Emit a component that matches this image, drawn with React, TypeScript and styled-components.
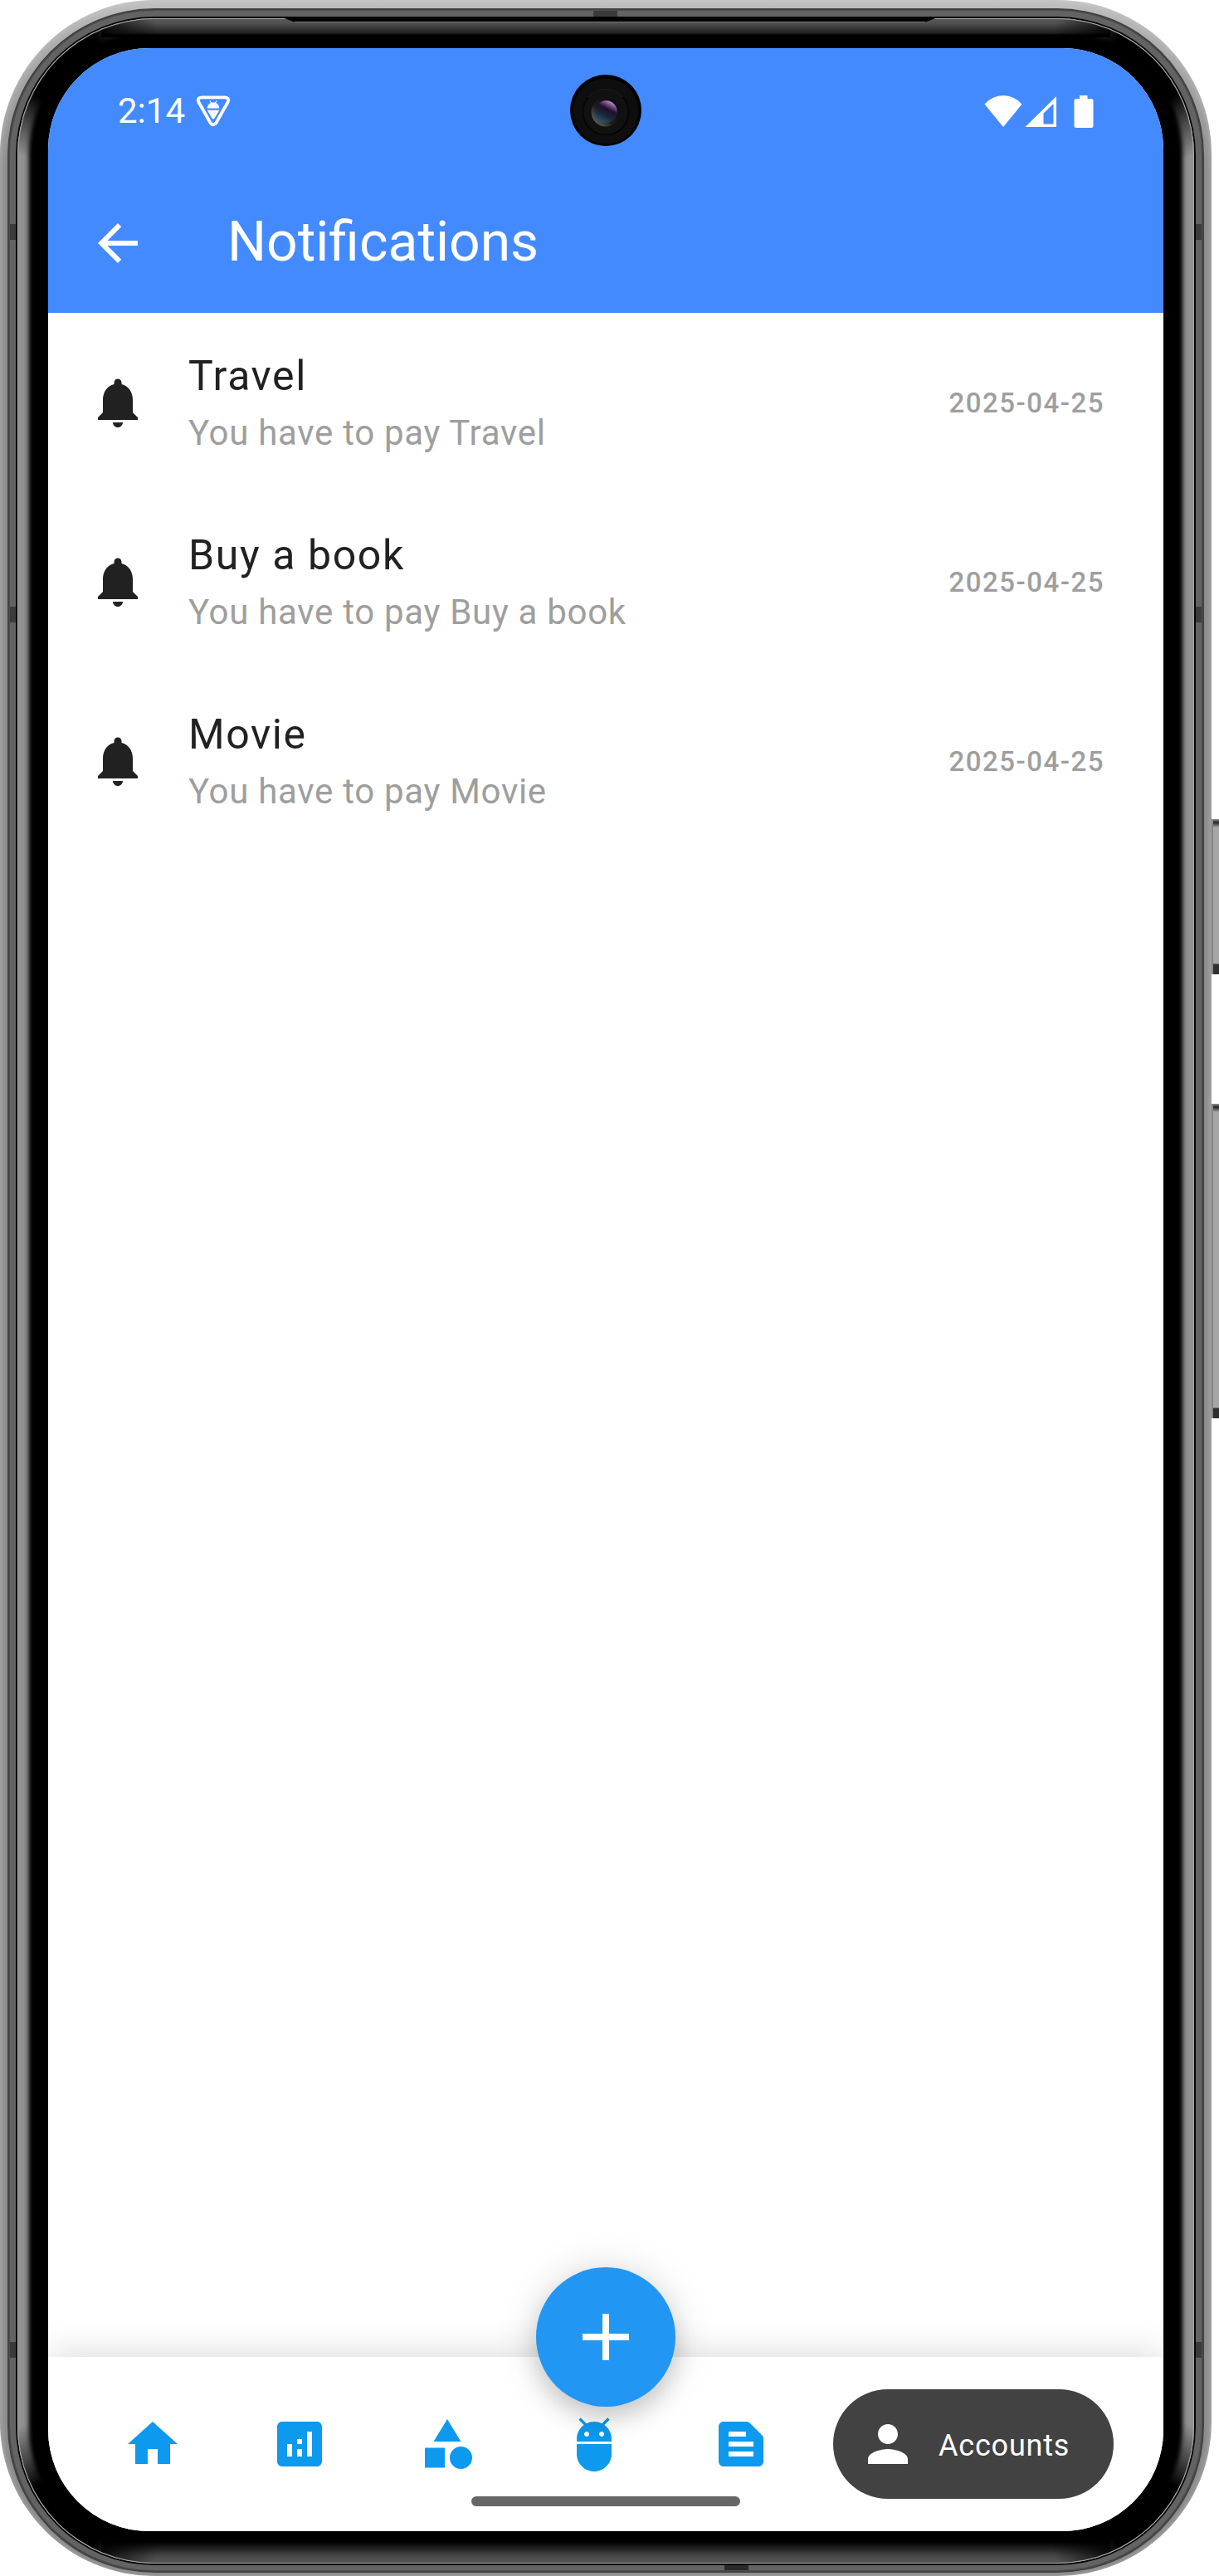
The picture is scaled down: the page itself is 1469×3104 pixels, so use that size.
import React from 'react';
import styled, { createGlobalStyle } from 'styled-components';

const GlobalStyle = createGlobalStyle`
  *, *::before, *::after { box-sizing: border-box; }
  body {
    margin: 0;
    background: #fff;
    font-family: Roboto, "Noto Sans", sans-serif;
  }
  svg { display: block; flex: none; }
`;

/* ---------- device ---------- */

const Stage = styled.div`
  display: flex;
  width: 1469px;
  height: 3104px;
  overflow: hidden;
`;

const Shell = styled.div`
  flex: none;
  width: 1460px;
  height: 3104px;
  padding: 10px 9px 4px;
  border-radius: 186px;
  background: linear-gradient(#c0c0c0 0, #b0b0b0 40px, #8c8c8c 200px, #8c8c8c 2900px, #808080 3104px);
  box-shadow: inset 0 0 8px 1px rgba(215, 215, 215, 0.5);
`;

const Band = styled.div`
  height: 3090px;
  padding: 12px 12px 11px;
  border-radius: 177px;
  background:
    linear-gradient(#3c3c3c, #3c3c3c) 0 260px / 100% 19px no-repeat,
    linear-gradient(#3c3c3c, #3c3c3c) 0 721px / 100% 19px no-repeat,
    linear-gradient(#3a3a3a, #3a3a3a) 0 2812px / 100% 19px no-repeat,
    linear-gradient(#3a3a3a, #3a3a3a) 706px 0 / 29px 30px no-repeat,
    linear-gradient(#2a2a2a, #2a2a2a) 864px 100% / 29px 12px no-repeat,
    #636363;
  box-shadow:
    inset 0 0 1px 2px #424242,
    inset 0 0 0 3px #505050;
`;

const Glass = styled.div`
  position: relative;
  height: 3067px;
  padding: 36px 37px 39px;
  border-radius: 165px;
  background: #000;
  box-shadow:
    0 0 0 2px #060606,
    inset 0 0 0 1px #a8a8a8,
    inset 0 0 5px 11px #929292,
    inset 0 0 5px 14px #6e6e6e;

  &::before {
    content: '';
    position: absolute;
    inset: 1px;
    border-radius: 164px;
    background:
      radial-gradient(circle at 50px 50px, #000 50px, rgba(0, 0, 0, 0.5) 85px, transparent 124px) 0 0 / 180px 180px no-repeat,
      radial-gradient(circle at 130px 50px, #000 50px, rgba(0, 0, 0, 0.5) 85px, transparent 124px) 100% 0 / 180px 180px no-repeat,
      radial-gradient(circle at 50px 130px, #000 50px, rgba(0, 0, 0, 0.5) 85px, transparent 124px) 0 100% / 180px 180px no-repeat,
      radial-gradient(circle at 130px 130px, #000 50px, rgba(0, 0, 0, 0.5) 85px, transparent 124px) 100% 100% / 180px 180px no-repeat,
      linear-gradient(#5a5a5a 0, #505050 5px, #202020 17px, #000 19px) 50% 0 / calc(100% - 200px) 22px no-repeat,
      linear-gradient(0deg, #555 0, #484848 8px, #000 25px) 50% 100% / calc(100% - 200px) 27px no-repeat;
  }
`;

const Speaker = styled.div`
  position: absolute;
  top: -1px;
  left: 319px;
  width: 790px;
  height: 6px;
  background: #000;
  border-bottom: 1px solid #777;
  clip-path: polygon(0 0, 100% 0, 98% 100%, 2% 100%);
`;

const SideKeys = styled.div`
  flex: none;
  width: 9px;
  padding-top: 987px;
  display: flex;
  flex-direction: column;
  gap: 156px;
`;

const SideKey = styled.div<{ $length: number }>`
  height: ${({ $length }) => $length}px;
  border-left: 2px solid #858585;
  background: linear-gradient(#999 0, #222 4px, #a6a6a6 10px, #a6a6a6 calc(100% - 13px), #303030 calc(100% - 12px), #303030 100%);
`;

const Screen = styled.div`
  position: relative;
  display: flex;
  flex-direction: column;
  width: 1344px;
  height: 2992px;
  border-radius: 122px;
  background: #fff;
  overflow: hidden;
`;

const Camera = styled.div`
  position: absolute;
  left: 629px;
  top: 32px;
`;

/* ---------- top of the app ---------- */

const Header = styled.header`
  flex: none;
  height: 319px;
  background: #448aff;
  color: #fff;
`;

const StatusBar = styled.div`
  display: flex;
  align-items: center;
  height: 151px;
  padding: 0 84px;
`;

const Clock = styled.span`
  width: 94px;
  font-size: 42px;
  line-height: 50px;
`;

const StatusIcons = styled.div`
  display: flex;
  align-items: center;
  margin-left: auto;
`;

const SignalSlot = styled.span`
  margin: 0 20px 0 3px;
`;

const AppBar = styled.div`
  display: flex;
  align-items: center;
  gap: 96px;
  height: 168px;
  padding-left: 48px;
`;

const AppTitle = styled.h1`
  margin: 0;
  font-size: 66px;
  font-weight: 400;
  line-height: 76px;
  padding-bottom: 2px;
`;

/* ---------- list ---------- */

const List = styled.ul`
  flex: 1;
  margin: 0;
  padding: 0;
  list-style: none;
`;

const Row = styled.li`
  display: flex;
  align-items: center;
  height: 216px;
  padding: 0 71px 0 48px;
  color: #212121;
`;

const RowText = styled.div`
  flex: 1;
  margin-left: 49px;
  padding-top: 2px;
`;

const RowTitle = styled.div`
  font-size: 50px;
  line-height: 72px;
  letter-spacing: 1.6px;
`;

const RowSubtitle = styled.div`
  font-size: 42px;
  line-height: 66px;
  letter-spacing: 0.7px;
  color: #9e9e9e;
`;

const RowDate = styled.time`
  font-size: 33px;
  font-weight: 500;
  letter-spacing: 1.5px;
  color: #9e9e9e;
`;

/* ---------- bottom navigation ---------- */

const BottomBar = styled.nav`
  position: relative;
  display: flex;
  align-items: center;
  flex: none;
  height: 210px;
  padding: 0 60px 0 90px;
  background: #fff;
  color: #0d99ee;
  box-shadow: 0 -3px 42px rgba(0, 0, 0, 0.15);
`;

const Tabs = styled.div`
  display: flex;
  justify-content: space-between;
  width: 781px;
`;

const ActiveTab = styled.div`
  display: flex;
  align-items: center;
  gap: 25px;
  width: 338px;
  height: 132px;
  margin-left: auto;
  padding-left: 30px;
  border-radius: 66px;
  background: #424242;
  color: #fff;
`;

const TabLabel = styled.span`
  padding-top: 3px;
  font-size: 36px;
  letter-spacing: 0.8px;
`;

const AddButton = styled.button`
  position: absolute;
  left: 588px;
  top: -108px;
  display: grid;
  place-items: center;
  width: 168px;
  height: 168px;
  padding: 0;
  border: 0;
  border-radius: 50%;
  background: #2196f3;
  color: #fff;
  box-shadow: 0 14px 28px rgba(0, 0, 0, 0.15), 0 2px 50px rgba(0, 0, 0, 0.14);
`;

const GestureBar = styled.div`
  position: absolute;
  left: 510px;
  bottom: 30px;
  width: 324px;
  height: 12px;
  border-radius: 6px;
  background: #666;
`;

/* ---------- icons ---------- */

const icons = {
  back: 'M20 11H7.83l5.59-5.59L12 4l-8 8 8 8 1.41-1.41L7.83 13H20v-2z',
  bell: 'M12 22c1.1 0 2-.9 2-2h-4c0 1.1.89 2 2 2zm6-6v-5c0-3.07-1.64-5.64-4.5-6.32V4c0-.83-.67-1.5-1.5-1.5s-1.5.67-1.5 1.5v.68C7.63 5.36 6 7.92 6 11v5l-2 2v1h16v-1l-2-2z',
  home: 'M10 20v-6h4v6h5v-8h3L12 3 2 12h3v8z',
  analytics:
    'M19 3H5c-1.1 0-2 .9-2 2v14c0 1.1.9 2 2 2h14c1.1 0 2-.9 2-2V5c0-1.1-.9-2-2-2zM9 17H7v-5h2v5zm4 0h-2v-3h2v3zm0-5h-2v-2h2v2zm4 5h-2V7h2v10z',
  category: 'M12 2l-5.5 9h11zM17.5 13a4.5 4.5 0 1 0 0 9 4.5 4.5 0 0 0 0-9zM3 13.5h8v8H3z',
  robot:
    'M5 16c0 3.87 3.13 7 7 7s7-3.13 7-7v-4H5v4zM16.12 4.37l2.1-2.1-.82-.83-2.3 2.31C14.16 3.28 13.12 3 12 3s-2.12.28-3.09.75L6.6 1.44l-.82.83 2.1 2.1C6.14 5.64 5 7.68 5 10v1h14v-1c0-2.32-1.14-4.36-2.88-5.63zM9 9c-.55 0-1-.45-1-1s.45-1 1-1 1 .45 1 1-.45 1-1 1zm6 0c-.55 0-1-.45-1-1s.45-1 1-1 1 .45 1 1-.45 1-1 1z',
  snippet:
    'M20.41 8.41l-4.83-4.83c-.37-.37-.88-.58-1.41-.58H5c-1.1 0-2 .9-2 2v14c0 1.1.9 2 2 2h14c1.1 0 2-.9 2-2V9.83c0-.53-.21-1.04-.59-1.42zM7 7h7v2H7V7zm10 10H7v-2h10v2zm0-4H7v-2h10v2z',
  person:
    'M12 12c2.21 0 4-1.79 4-4s-1.79-4-4-4-4 1.79-4 4 1.79 4 4 4zm0 2c-2.67 0-8 1.34-8 4v2h16v-2c0-2.66-5.33-4-8-4z',
  plus: 'M19 13h-6v6h-2v-6H5v-2h6V5h2v6h6v2z',
};

type IconName = keyof typeof icons;

const Icon = ({ name, size = 72 }: { name: IconName; size?: number }) => (
  <svg width={size} height={size} viewBox="0 0 24 24" fill="currentColor">
    <path fillRule="evenodd" d={icons[name]} />
  </svg>
);

const DebugBadge = () => (
  <svg width="42" height="38" viewBox="0 0 42 38" fill="#fff">
    <path d="M7 2.4H35Q41 3 38.6 8L24.500 33Q21 37.500 17.500 33L3.400 8Q1 3 7 2.400Z" fill="none" stroke="#fff" strokeWidth="3.800" />
    <path d="M13.700 15.600Q14 10.500 18 9L16.400 6.800 17.200 6.300 19 8.600H23L24.800 6.300 25.600 6.800 24 9Q28 10.500 28.300 15.600Z" />
    <path d="M13.700 17.800H28.300L22.600 27.500Q21 29.500 19.400 27.500Z" />
  </svg>
);

const Wifi = () => (
  <svg width="46" height="40" viewBox="0 0 46 40" fill="#fff">
    <path d="M0.500 11.500Q10 1 23 1T45.500 11.500L23 39Z" />
  </svg>
);

const Signal = () => (
  <svg width="39" height="40" viewBox="0 0 39 40" fill="#fff">
    <path fillRule="evenodd" d="M0.500 39L38 2V39ZM22.500 22.500V35.500H34.500V11Z" />
  </svg>
);

const Battery = () => (
  <svg width="24" height="40" viewBox="0 0 24 40" fill="#fff">
    <path d="M7 1H16.500V5H21Q23.500 5 23.500 7.500V37.500Q23.500 40 21 40H3Q.5 40 .5 37.500V7.500Q.5 5 3 5H7Z" />
  </svg>
);

const Lens = () => (
  <svg width="86" height="86" viewBox="0 0 86 86">
    <defs>
      <linearGradient id="rim" x1="0.100" y1="0.900" x2="0.800" y2="0.200">
        <stop offset="0" stopColor="#666" />
        <stop offset="0.450" stopColor="#1c1c1c" />
        <stop offset="1" stopColor="#0e0e0e" />
      </linearGradient>
      <linearGradient id="iris" x1="0.800" y1="0.050" x2="0.300" y2="1">
        <stop offset="0" stopColor="#d59be8" />
        <stop offset="0.180" stopColor="#77508a" />
        <stop offset="0.380" stopColor="#1d1028" />
        <stop offset="0.650" stopColor="#1c2438" />
        <stop offset="1" stopColor="#24586a" />
      </linearGradient>
    </defs>
    <circle cx="43" cy="43" r="43" fill="#000" />
    <circle cx="43" cy="44" r="39.500" fill="#0e0e0e" />
    <circle cx="43" cy="45" r="27.500" fill="#111" stroke="#030303" strokeWidth="1.500" />
    <path d="M22 27A28 28 0 0 1 64 27" fill="none" stroke="#242424" strokeWidth="1" />
    <circle cx="43" cy="45" r="17.500" fill="url(#rim)" />
    <circle cx="43.500" cy="44.500" r="13.200" fill="url(#iris)" />
  </svg>
);

/* ---------- page ---------- */

const notifications = [
  { title: 'Travel', date: '2025-04-25' },
  { title: 'Buy a book', date: '2025-04-25' },
  { title: 'Movie', date: '2025-04-25' },
];

const tabs: IconName[] = ['home', 'analytics', 'category', 'robot', 'snippet'];

export default function App() {
  return (
    <Stage>
      <GlobalStyle />
      <Shell>
        <Band>
          <Glass>
            <Speaker />
            <Screen>
              <Header>
                <StatusBar>
                  <Clock>2:14</Clock>
                  <DebugBadge />
                  <StatusIcons>
                    <Wifi />
                    <SignalSlot>
                      <Signal />
                    </SignalSlot>
                    <Battery />
                  </StatusIcons>
                </StatusBar>
                <AppBar>
                  <Icon name="back" />
                  <AppTitle>Notifications</AppTitle>
                </AppBar>
              </Header>
              <List>
                {notifications.map((item) => (
                  <Row key={item.title}>
                    <Icon name="bell" />
                    <RowText>
                      <RowTitle>{item.title}</RowTitle>
                      <RowSubtitle>You have to pay {item.title}</RowSubtitle>
                    </RowText>
                    <RowDate>{item.date}</RowDate>
                  </Row>
                ))}
              </List>
              <BottomBar>
                <Tabs>
                  {tabs.map((name) => (
                    <Icon key={name} name={name} />
                  ))}
                </Tabs>
                <ActiveTab>
                  <Icon name="person" />
                  <TabLabel>Accounts</TabLabel>
                </ActiveTab>
                <AddButton aria-label="Add">
                  <Icon name="plus" size={96} />
                </AddButton>
                <GestureBar />
              </BottomBar>
              <Camera>
                <Lens />
              </Camera>
            </Screen>
          </Glass>
        </Band>
      </Shell>
      <SideKeys>
        <SideKey $length={187} />
        <SideKey $length={379} />
      </SideKeys>
    </Stage>
  );
}
